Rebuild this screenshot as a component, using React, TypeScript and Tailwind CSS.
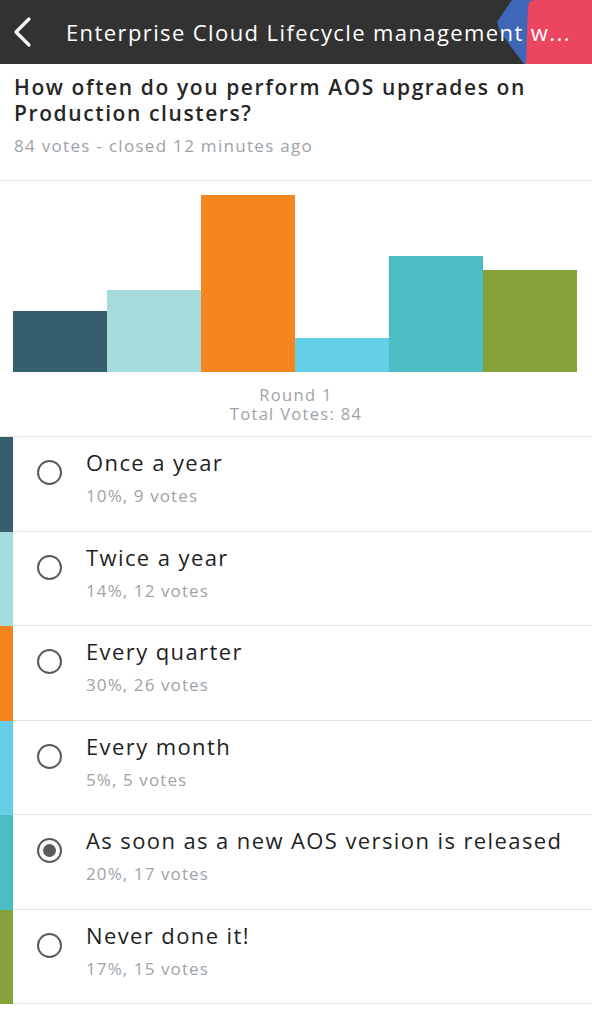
type Option = { label: string; votes: number; color: string; selected?: boolean }

const options: Option[] = [
  { label: "Once a year", votes: 9, color: "#365f6e" },
  { label: "Twice a year", votes: 12, color: "#a5dcdb" },
  { label: "Every quarter", votes: 26, color: "#f5861f" },
  { label: "Every month", votes: 5, color: "#63d0e8" },
  { label: "As soon as a new AOS version is released", votes: 17, color: "#4bbec3", selected: true },
  { label: "Never done it!", votes: 15, color: "#87a23b" },
]

const total = options.reduce((n, o) => n + o.votes, 0)
const maxVotes = Math.max(...options.map((o) => o.votes))

function Radio({ checked }: { checked?: boolean }) {
  return (
    <span className="flex h-[25px] w-[25px] items-center justify-center rounded-full border-2 border-[#5a5a5a]">
      {checked && <span className="h-[13px] w-[13px] rounded-full bg-[#5a5a5a]" />}
    </span>
  )
}

export default function App() {
  return (
    <div className="min-h-screen bg-white font-['Open_Sans',sans-serif]">
      <header className="relative flex h-16 items-center overflow-hidden bg-[#323232]">
        <svg className="absolute right-0 top-0" width="100" height="64" viewBox="0 0 100 64">
          <path d="M20 0 L5 22 L8 32 L32 64 L40 64 L40 0 Z" fill="#3f67b8" />
          <path d="M40 0 H100 V64 H34 L36 6 Q37 0 42 0 Z" fill="#ec4560" />
        </svg>
        <svg className="relative ml-[12px]" width="22" height="32" viewBox="0 0 22 32">
          <polyline
            points="17,3 4,16 17,29"
            fill="none"
            stroke="white"
            strokeWidth="3.2"
            strokeLinecap="round"
            strokeLinejoin="round"
          />
        </svg>
        <h1 className="relative ml-[32px] text-[22px] font-medium tracking-[1.4px] text-white">
          Enterprise Cloud Lifecycle management w...
        </h1>
      </header>

      <section className="border-b border-[#e4e4e4] px-[14px] pb-[22px] pt-[10px]">
        <h2 className="text-[21px] font-semibold leading-[26px] tracking-[1.6px] text-[#262626]">
          How often do you perform AOS upgrades on Production clusters?
        </h2>
        <p className="mt-[8px] text-[17px] leading-[24px] tracking-[1.3px] text-[#9da3a8]">
          84 votes - closed 12 minutes ago
        </p>
      </section>

      <section className="border-b border-[#e4e4e4] pb-[13px] pt-[14px]">
        <div className="ml-[13px] mr-[15px] flex h-[177px] items-end">
          {options.map((o) => (
            <div
              key={o.label}
              className="flex-1"
              style={{ height: (o.votes / maxVotes) * 177, backgroundColor: o.color }}
            />
          ))}
        </div>
        <div className="mt-[14px] text-center text-[16.5px] leading-[18.5px] tracking-[1.3px] text-[#9da3a8]">
          <div>Round 1</div>
          <div>Total Votes: {total}</div>
        </div>
      </section>

      <ul>
        {options.map((o) => (
          <li key={o.label} className="flex h-[94.5px]">
            <div className="w-[13px] shrink-0" style={{ backgroundColor: o.color }} />
            <div className="flex flex-1 border-b border-[#e4e4e4]">
              <div className="flex w-[73px] justify-center pt-[23px]">
                <Radio checked={o.selected} />
              </div>
              <div className="pt-[10px]">
                <div className="text-[22px] font-medium leading-[30px] tracking-[1.4px] text-[#1f1f1f]">
                  {o.label}
                </div>
                <div className="mt-[7px] text-[17px] leading-[24px] tracking-[1.1px] text-[#9da3a8]">
                  {Math.floor((o.votes / total) * 100)}%, {o.votes} votes
                </div>
              </div>
            </div>
          </li>
        ))}
      </ul>
    </div>
  )
}
